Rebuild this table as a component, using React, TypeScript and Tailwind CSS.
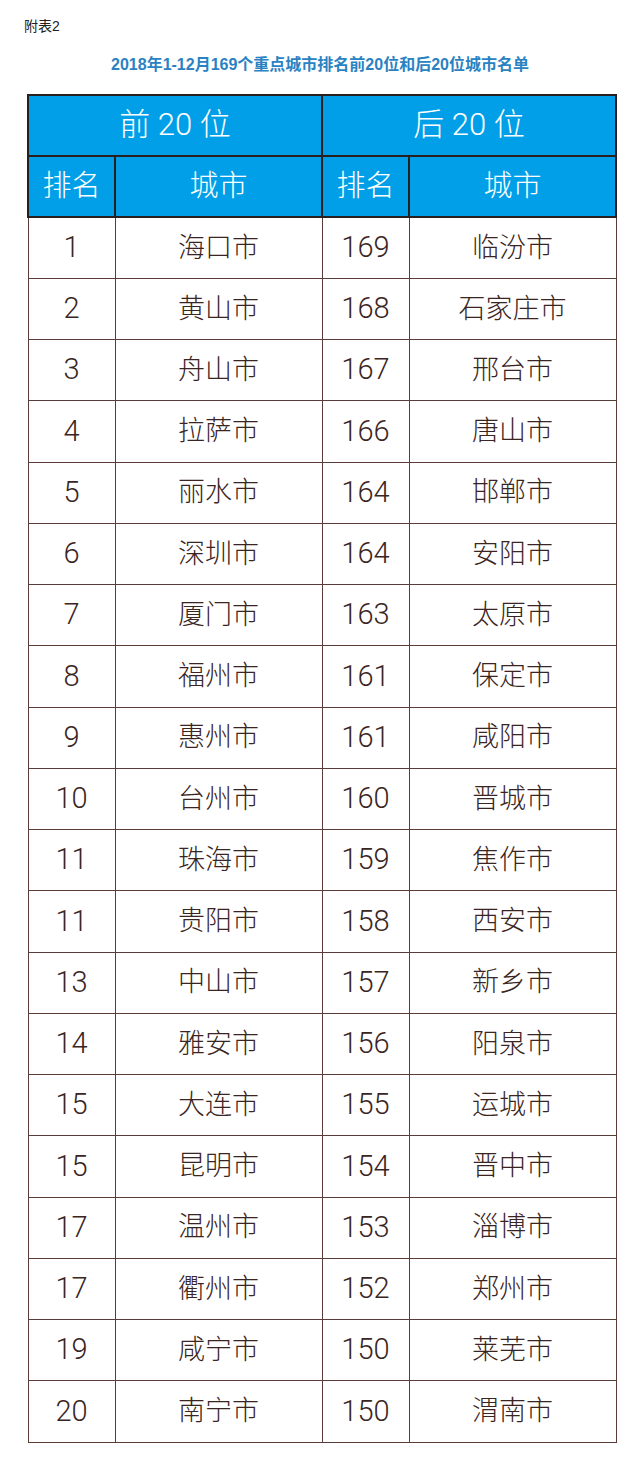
const top = [
  ["1", "海口市"], ["2", "黄山市"], ["3", "舟山市"], ["4", "拉萨市"], ["5", "丽水市"],
  ["6", "深圳市"], ["7", "厦门市"], ["8", "福州市"], ["9", "惠州市"], ["10", "台州市"],
  ["11", "珠海市"], ["11", "贵阳市"], ["13", "中山市"], ["14", "雅安市"], ["15", "大连市"],
  ["15", "昆明市"], ["17", "温州市"], ["17", "衢州市"], ["19", "咸宁市"], ["20", "南宁市"],
]
const bottom = [
  ["169", "临汾市"], ["168", "石家庄市"], ["167", "邢台市"], ["166", "唐山市"], ["164", "邯郸市"],
  ["164", "安阳市"], ["163", "太原市"], ["161", "保定市"], ["161", "咸阳市"], ["160", "晋城市"],
  ["159", "焦作市"], ["158", "西安市"], ["157", "新乡市"], ["156", "阳泉市"], ["155", "运城市"],
  ["154", "晋中市"], ["153", "淄博市"], ["152", "郑州市"], ["150", "莱芜市"], ["150", "渭南市"],
]

const font = { fontFamily: '"Liberation Sans", "Noto Sans CJK SC", sans-serif' }
const thin = { fontFamily: 'Roboto, "Noto Sans CJK SC", sans-serif' }

export default function App() {
  return (
    <div className="w-[640px] min-h-[1463px] bg-white" style={font}>
      <div className="px-6 pt-[17px] text-[14px] leading-[18px] text-[#222]">附表2</div>
      <div className="mt-[21px] text-center text-[16px] font-bold leading-[18px] text-[#2a82c2]">
        2018年1-12月169个重点城市排名前20位和后20位城市名单
      </div>
      <table className="ml-[27px] mt-[20px] w-[589px] table-fixed border-collapse font-light" style={thin}>
        <colgroup>
          <col className="w-[87px]" />
          <col className="w-[207px]" />
          <col className="w-[87px]" />
          <col className="w-[207px]" />
        </colgroup>
        <thead>
          <tr className="h-[61px] bg-[#009fe8] text-white">
            <th colSpan={2} className="border-2 border-[#2a1f1f] text-[31px] font-light">前 20 位</th>
            <th colSpan={2} className="border-2 border-[#2a1f1f] text-[31px] font-light">后 20 位</th>
          </tr>
          <tr className="h-[61px] bg-[#009fe8] text-white">
            <th className="border-2 border-[#2a1f1f] text-[29px] font-light">排名</th>
            <th className="border-2 border-[#2a1f1f] text-[29px] font-light">城市</th>
            <th className="border-2 border-[#2a1f1f] text-[29px] font-light">排名</th>
            <th className="border-2 border-[#2a1f1f] text-[29px] font-light">城市</th>
          </tr>
        </thead>
        <tbody className="text-[#3a2522]">
          {top.map((r, i) => (
            <tr key={i} className="h-[61.25px]">
              <td className="border border-[#5a3d39] text-center text-[29px]">{r[0]}</td>
              <td className="border border-[#5a3d39] text-center text-[27px]">{r[1]}</td>
              <td className="border border-[#5a3d39] text-center text-[29px]">{bottom[i][0]}</td>
              <td className="border border-[#5a3d39] text-center text-[27px]">{bottom[i][1]}</td>
            </tr>
          ))}
        </tbody>
      </table>
    </div>
  )
}
